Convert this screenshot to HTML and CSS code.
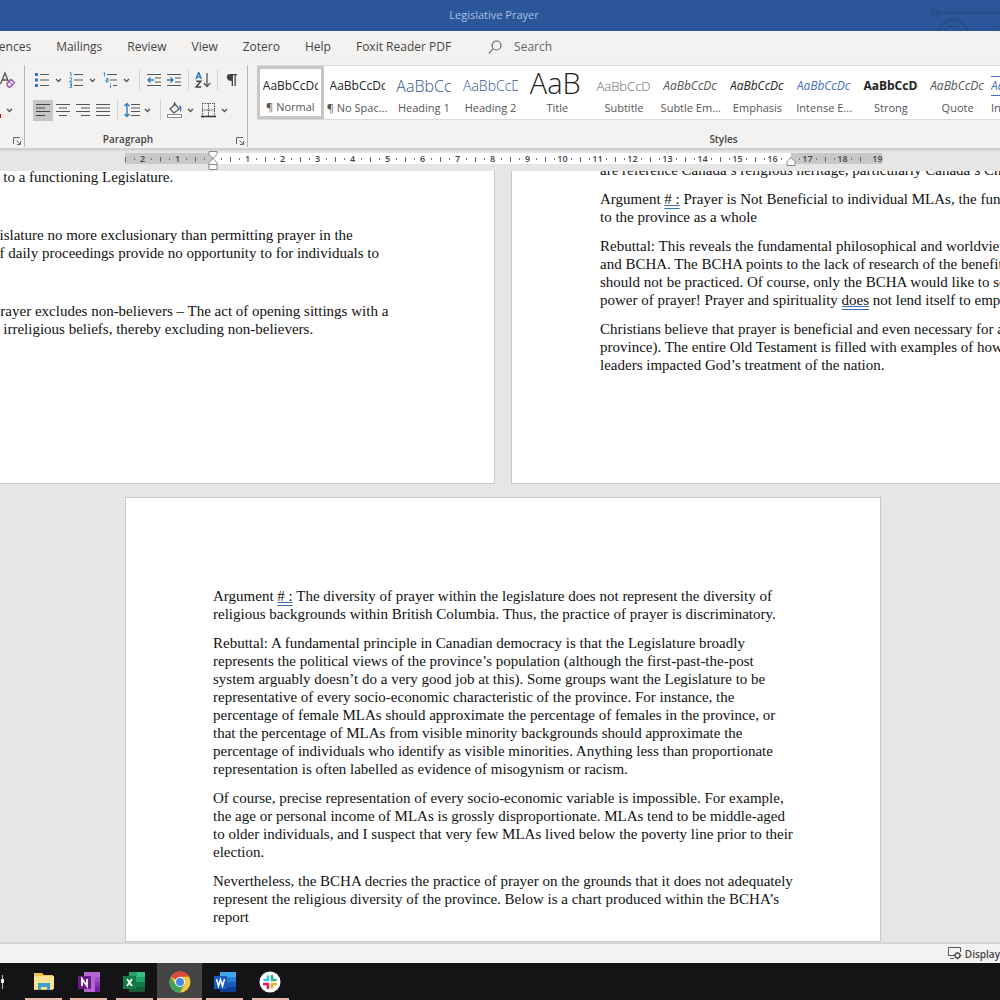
FILE: index.html
```html
<!DOCTYPE html>
<html lang="en">
<head>
<meta charset="utf-8">
<title>Legislative Prayer</title>
<link rel="stylesheet" href="styles.css">
</head>
<body>
<svg class="defs" aria-hidden="true">
  <symbol id="chev" viewBox="0 0 7 5"><path d="M1 1l2.500 2.500L6 1" fill="none" stroke="#555" stroke-width="1.300"/></symbol>
  <symbol id="launch" viewBox="0 0 8 8"><path d="M.5 7V.5H7M3.500 3.500L7 7M7.500 4v3.500H4" fill="none" stroke="#666"/></symbol>
</svg>

<header class="titlebar">
  <span>Legislative Prayer</span>
  <svg class="circuit" width="72" height="31" viewBox="0 0 72 31" fill="none" stroke="#264f8f" stroke-width="2" aria-hidden="true">
    <circle cx="7" cy="13" r="3"/><path d="M10 13h62"/><circle cx="25" cy="35" r="15" stroke-width="3"/><circle cx="25" cy="35" r="9"/><circle cx="70" cy="31" r="4"/>
  </svg>
</header>

<nav class="tabs">
  <a href="#">References</a><a href="#">Mailings</a><a href="#">Review</a><a href="#">View</a><a href="#">Zotero</a><a href="#">Help</a><a href="#">Foxit Reader PDF</a>
  <button class="search"><svg width="14" height="14" viewBox="0 0 14 14" fill="none" stroke="#666" stroke-width="1.200"><circle cx="8.500" cy="5.500" r="4.500"/><path d="M5.300 8.700L.7 13.300"/></svg>Search</button>
</nav>

<section class="ribbon">
  <div class="group font-group">
    <div class="tools">
      <button class="clear" aria-label="Clear formatting"><svg width="16" height="18" viewBox="0 0 16 18" fill="none"><path d="M.5 13L5 2l4 10M2 9h5.500" stroke="#555" stroke-width="1.300"/><path d="M7 12.500l4-4 3.500 3-4 4.500H8.500L7 14z" fill="#f3e6f8" stroke="#9350ab" stroke-width="1.300"/><path d="M9 10.500l3.500 3.500" stroke="#9350ab"/></svg></button>
    </div>
    <div class="tools">
      <button class="color" aria-label="Font color"><svg width="6" height="18" viewBox="0 0 6 18"><path d="M0 13h1v4H0z" fill="#c00"/></svg><svg width="7" height="5"><use href="#chev"/></svg></button>
    </div>
    <div class="label"><svg class="launcher" width="8" height="8"><use href="#launch"/></svg></div>
  </div>

  <div class="group para-group">
    <div class="tools">
      <button class="split" aria-label="Bullets"><svg width="16" height="16" viewBox="0 0 16 16"><path d="M0 1h3v3H0zM0 6.500h3v3H0zM0 12h3v3H0z" fill="#2f7dc0"/><path d="M5 2.500h9M5 8h9M5 13.500h9" stroke="#555" stroke-width="1.200"/></svg><svg width="7" height="5"><use href="#chev"/></svg></button>
      <button class="split" aria-label="Numbering"><svg width="16" height="16" viewBox="0 0 16 16"><g fill="none" stroke="#3b8bc8"><path d="M1 1l1-.5V4.500M.5 6h2v1.500L.7 9.500h2.300M.5 11h2v2h-1.500h1.500v2.500H.5"/></g><path d="M5 2.500h9M5 8h9M5 13.500h9" stroke="#555" stroke-width="1.200"/></svg><svg width="7" height="5"><use href="#chev"/></svg></button>
      <button class="split" aria-label="Multilevel list"><svg width="16" height="16" viewBox="0 0 16 16"><g fill="none" stroke="#3b8bc8"><path d="M.5 1l1-.5v4M3 6.500h2v3.500H3V8h2M7.500 11v1M7.500 13v3"/></g><path d="M4 2.500h10M7 8h7M10 13.500h4" stroke="#555" stroke-width="1.200"/></svg><svg width="7" height="5"><use href="#chev"/></svg></button>
      <span class="sep"></span>
      <button class="btn" aria-label="Decrease indent"><svg width="16" height="16" viewBox="0 0 16 16"><path d="M1 2.500h14M9 6h6M9 10h6M1 13.500h14" stroke="#555" stroke-width="1.200"/><path d="M8 8H2M4.500 5.500L2 8l2.500 2.500" fill="none" stroke="#2f7dc0" stroke-width="1.400"/></svg></button>
      <button class="btn" aria-label="Increase indent"><svg width="16" height="16" viewBox="0 0 16 16"><path d="M1 2.500h14M9 6h6M9 10h6M1 13.500h14" stroke="#555" stroke-width="1.200"/><path d="M1 8h6M4.500 5.500L7 8l-2.500 2.500" fill="none" stroke="#2f7dc0" stroke-width="1.400"/></svg></button>
      <span class="sep"></span>
      <button class="btn" aria-label="Sort"><svg width="16" height="16" viewBox="0 0 16 16" fill="none" stroke-width="1.500"><path d="M1 7l2.700-6.500L6.500 7M2 5h3.500" stroke="#2f7dc0"/><path d="M1.200 9.200h4.600L1.200 15h5" stroke="#444"/><path d="M12 1v13M8.800 11l3.200 3.500 3.200-3.500" stroke="#555" stroke-width="1.300"/></svg></button>
      <span class="sep"></span>
      <button class="btn" aria-label="Show paragraph marks"><svg width="16" height="16" viewBox="0 0 16 16"><path d="M6 2h7v1.200h-1.200V14h-1.300V3.200H9V14H7.700V9C1.500 9 1.500 2 6 2z" fill="#444"/></svg></button>
    </div>
    <div class="tools">
      <button class="btn on" aria-label="Align left"><svg width="16" height="16" viewBox="0 0 16 16" stroke="#444" stroke-width="1.200"><path d="M1 2.500h14M1 6h9M1 9.500h14M1 13.500h9"/></svg></button>
      <button class="btn" aria-label="Center"><svg width="16" height="16" viewBox="0 0 16 16" stroke="#555" stroke-width="1.200"><path d="M1 2.500h14M4 6h8M1 9.500h14M4 13.500h8"/></svg></button>
      <button class="btn" aria-label="Align right"><svg width="16" height="16" viewBox="0 0 16 16" stroke="#555" stroke-width="1.200"><path d="M1 2.500h14M6 6h9M1 9.500h14M6 13.500h9"/></svg></button>
      <button class="btn" aria-label="Justify"><svg width="16" height="16" viewBox="0 0 16 16" stroke="#555" stroke-width="1.200"><path d="M1 2.500h14M1 6h14M1 9.500h14M1 13.500h14"/></svg></button>
      <span class="sep"></span>
      <button class="split" aria-label="Line spacing"><svg width="16" height="16" viewBox="0 0 16 16" fill="none"><path d="M3 1.500v13M.5 4L3 1.500 5.500 4M.5 12L3 14.500 5.500 12" stroke="#2f7dc0" stroke-width="1.400"/><path d="M7 2.500h9M7 6h9M7 9.500h9M7 13.500h9" stroke="#555" stroke-width="1.200"/></svg><svg width="7" height="5"><use href="#chev"/></svg></button>
      <span class="sep"></span>
      <button class="split" aria-label="Shading"><svg width="16" height="16" viewBox="0 0 16 16" fill="none"><path d="M3 7l5-5 4 5-5 4zM7.500 4V0" stroke="#555" stroke-width="1.200"/><path d="M12 3c3 1 3 4 1.500 7C12 8 13 5 12 3z" fill="#2f7dc0"/><path d="M.5 12.500h14v3H.5z" fill="#fff" stroke="#888"/></svg><svg width="7" height="5"><use href="#chev"/></svg></button>
      <button class="split" aria-label="Borders"><svg width="16" height="16" viewBox="0 0 16 16" fill="none" stroke="#555"><path d="M1 1.500h13M1.500 1v13M13.500 1v13" stroke-dasharray="1.500 1"/><path d="M7.500 1v13M1 8h13" stroke-dasharray="1.500 .8"/><path d="M0 14.500h15" stroke="#333" stroke-width="1.500"/></svg><svg width="7" height="5"><use href="#chev"/></svg></button>
    </div>
    <div class="label">Paragraph<svg class="launcher" width="8" height="8"><use href="#launch"/></svg></div>
  </div>

  <div class="group style-group">
    <div class="gallery">
      <button class="style selected"><span class="sample">AaBbCcDc</span><span class="name">¶ Normal</span></button>
      <button class="style"><span class="sample">AaBbCcDc</span><span class="name">¶ No Spac...</span></button>
      <button class="style"><span class="sample h1">AaBbCc</span><span class="name">Heading 1</span></button>
      <button class="style"><span class="sample h2">AaBbCcD</span><span class="name">Heading 2</span></button>
      <button class="style"><span class="sample big">AaB</span><span class="name">Title</span></button>
      <button class="style"><span class="sample sub">AaBbCcD</span><span class="name">Subtitle</span></button>
      <button class="style"><span class="sample subtle">AaBbCcDc</span><span class="name">Subtle Em...</span></button>
      <button class="style"><span class="sample emph">AaBbCcDc</span><span class="name">Emphasis</span></button>
      <button class="style"><span class="sample intense">AaBbCcDc</span><span class="name">Intense E...</span></button>
      <button class="style"><span class="sample strong">AaBbCcDc</span><span class="name">Strong</span></button>
      <button class="style"><span class="sample subtle">AaBbCcDc</span><span class="name">Quote</span></button>
      <button class="style cut"><span class="sample intense lined">AaBbCcDc</span><span class="name">Intense Q...</span></button>
    </div>
    <div class="label">Styles</div>
  </div>
</section>

<div class="ruler">
  <div class="scale">
    <i>2</i><i>1</i><i></i><i>1</i><i>2</i><i>3</i><i>4</i><i>5</i><i>6</i><i>7</i><i>8</i><i>9</i><i>10</i><i>11</i><i>12</i><i>13</i><i>14</i><i>15</i><i>16</i><i>17</i><i>18</i><i>19</i>
    <svg class="indent-left" width="10" height="20" viewBox="0 0 10 20" fill="#fff" stroke="#888"><path d="M1 .5h8v3l-4 4-4-4zM5 7.500l4 4v2H1v-2zM1 13.500h8v5H1z"/></svg>
    <svg class="indent-right" width="10" height="9" viewBox="0 0 10 9" fill="#fff" stroke="#888"><path d="M5 .5l4 4v4H1v-4z"/></svg>
  </div>
</div>

<main class="workspace">
  <div class="spread">
    <article class="page left-page">
      <p>   to a functioning Legislature.</p>
      <p> </p>
      <p>gislature no more exclusionary than permitting prayer in the
of daily proceedings provide no opportunity to for individuals to</p>
      <p> </p>
      <p>Prayer excludes non-believers – The act of opening sittings with a
y irreligious beliefs, thereby excluding non-believers.</p>
    </article>
    <article class="page right-page">
      <p>are reference Canada’s religious heritage, particularly Canada’s Christian</p>
      <p>Argument <u># :</u> Prayer is Not Beneficial to individual MLAs, the function
to the province as a whole</p>
      <p>Rebuttal: This reveals the fundamental philosophical and worldviews
and BCHA. The BCHA points to the lack of research of the benefits
should not be practiced. Of course, only the BCHA would like to see
power of prayer! Prayer and spirituality <u>does</u> not lend itself to empirical</p>
      <p>Christians believe that prayer is beneficial and even necessary for a
province). The entire Old Testament is filled with examples of how
leaders impacted God’s treatment of the nation.</p>
    </article>
  </div>
  <article class="page last-page">
    <p>Argument <u># :</u> The diversity of prayer within the legislature does not represent the diversity of
religious backgrounds within British Columbia. Thus, the practice of prayer is discriminatory.</p>
    <p>Rebuttal: A fundamental principle in Canadian democracy is that the Legislature broadly
represents the political views of the province’s population (although the first-past-the-post
system arguably doesn’t do a very good job at this). Some groups want the Legislature to be
representative of every socio-economic characteristic of the province. For instance, the
percentage of female MLAs should approximate the percentage of females in the province, or
that the percentage of MLAs from visible minority backgrounds should approximate the
percentage of individuals who identify as visible minorities. Anything less than proportionate
representation is often labelled as evidence of misogynism or racism.</p>
    <p>Of course, precise representation of every socio-economic variable is impossible. For example,
the age or personal income of MLAs is grossly disproportionate. MLAs tend to be middle-aged
to older individuals, and I suspect that very few MLAs lived below the poverty line prior to their
election.</p>
    <p>Nevertheless, the BCHA decries the practice of prayer on the grounds that it does not adequately
represent the religious diversity of the province. Below is a chart produced within the BCHA’s
report</p>
  </article>
</main>

<div class="status">
  <button class="display"><svg width="14" height="13" viewBox="0 0 14 13" fill="none" stroke="#555"><path d="M6 8.500H.5V.5h12V5M2 11.500h4"/><circle cx="9.500" cy="8.500" r="2.500" stroke-width="1.500"/><path d="M9.500 5v1M9.500 11v1.500M6 8.500h1M12 8.500h1.500"/></svg>Display</button>
</div>

<footer class="taskbar">
  <svg class="taskview" width="21" height="37" viewBox="0 0 21 37" aria-hidden="true"><path d="M2.500 12v14" stroke="#bbb"/><path d="M1 16h3v4H1z" fill="#eee"/></svg>
  <div class="apps">
    <button aria-label="File Explorer"><svg width="22" height="22" viewBox="0 0 22 22"><path d="M1 2h8l2 2h9v15H1z" fill="#f0c251"/><path d="M1 5h20v13H1z" fill="#fbe190"/><path d="M5 12h12v7h-3v-3H8v3H5z" fill="#3d9fd3"/></svg></button>
    <button aria-label="OneNote"><svg width="22" height="22" viewBox="0 0 22 22"><path d="M6 1h16v20H6z" fill="#b666d2"/><path d="M17 6h5v5h-5z" fill="#9a4fc0"/><path d="M17 11h5v5h-5z" fill="#8535b0"/><path d="M17 16h5v5h-5z" fill="#6e2399"/><path d="M0 5h13v13H0z" fill="#6b1b87"/><path d="M4 15V8l5 7V8" fill="none" stroke="#fff" stroke-width="1.800"/></svg></button>
    <button aria-label="Excel"><svg width="22" height="22" viewBox="0 0 22 22"><path d="M6 1h16v20H6z" fill="#21a366"/><path d="M14 1h8v5h-8z" fill="#33c481"/><path d="M6 11h16v5H6z" fill="#107c41"/><path d="M6 16h16v5H6z" fill="#185c37"/><path d="M0 5h13v13H0z" fill="#107c41"/><path d="M4 8l5 7M9 8l-5 7" stroke="#fff" stroke-width="1.800"/></svg></button>
    <button class="active" aria-label="Chrome"><svg width="22" height="22" viewBox="0 0 22 22"><circle cx="11" cy="11" r="10.500" fill="#f6c945"/><path d="M11 11L1.900 5.750A10.500 10.500 0 0 1 20.100 5.750H11z" fill="#dc4b3e"/><path d="M1.900 5.750A10.500 10.500 0 0 0 11 21.500l4.500-8L11 11 6.500 13.500z" fill="#3fa35b"/><circle cx="11" cy="11" r="5" fill="#fff"/><circle cx="11" cy="11" r="4" fill="#4a86e8"/></svg></button>
    <button aria-label="Word"><svg width="22" height="22" viewBox="0 0 22 22"><path d="M6 1h16v20H6z" fill="#41a5ee"/><path d="M6 6h16v5H6z" fill="#2b7cd3"/><path d="M6 11h16v5H6z" fill="#185abd"/><path d="M6 16h16v5H6z" fill="#103f91"/><path d="M0 5h13v13H0z" fill="#185abd"/><path d="M2.500 8l2 7 2-6.500 2 6.500 2-7" fill="none" stroke="#fff" stroke-width="1.500"/></svg></button>
    <button aria-label="Slack"><svg width="22" height="22" viewBox="0 0 22 22" fill="none" stroke-width="2.600" stroke-linecap="round"><circle cx="11" cy="11" r="10.500" fill="#fff"/><path d="M9 5.500V9M5.500 9H9" stroke="#36c5f0"/><path d="M13 5v4M13 9h3.500" stroke="#2eb67d"/><path d="M13 13v3.500M13 13h4" stroke="#ecb22e"/><path d="M9 13v4M5 13h4" stroke="#e01e5a"/></svg></button>
  </div>
</footer>
</body>
</html>
```
FILE: styles.css
```css
* { box-sizing: border-box; }
body {
  margin: 0;
  height: 100vh;
  display: flex;
  flex-direction: column;
  overflow: hidden;
  background: #e6e6e6;
  color: #444;
  font-family: "Open Sans", "Noto Sans", sans-serif;
  font-size: 11px;
}
button {
  border: 0;
  padding: 0;
  background: none;
  color: inherit;
  font: inherit;
}
svg { flex: none; display: block; }
.defs { position: absolute; width: 0; height: 0; }

.titlebar {
  position: relative;
  flex: none;
  height: 31px;
  display: flex;
  align-items: center;
  justify-content: center;
  padding: 0 12px 2px 0;
  background: #2b579a;
  color: #a9c0e2;
}
.circuit { position: absolute; right: 0; top: 0; }

.tabs {
  flex: none;
  display: flex;
  align-items: center;
  gap: 25px;
  height: 31px;
  margin-left: -31px;
  font-size: 12px;
}
.tabs, .ribbon, .status { background: #f3f2f1; }
.tabs a { color: #444; text-decoration: none; white-space: nowrap; }
.search { display: flex; align-items: center; gap: 12px; margin-left: 12px; color: #666; }

.ribbon {
  flex: none;
  display: flex;
  height: 87px;
  padding-top: 3px;
  border-bottom: 1px solid #d2d0ce;
  box-shadow: 0 1px 2px #c4c4c4;
}
.group { display: flex; flex-direction: column; height: 82px; }
.font-group { width: 25px; border-right: 1px solid #b8b6b4; }
.para-group { width: 223px; padding-left: 8px; border-right: 1px solid #b8b6b4; }
.style-group { flex: 1; min-width: 0; padding-left: 9px; }
.tools { display: flex; align-items: center; height: 30px; }
.label {
  position: relative;
  display: flex;
  justify-content: center;
  align-items: center;
  height: 16px;
  margin-top: auto;
  font-size: 10px;
  font-weight: 600;
}
.para-group .label { padding-right: 24px; }
.style-group .label { padding-left: 190px; }
.launcher { position: absolute; right: 3px; bottom: 2px; }
.color { display: flex; align-items: center; }
.btn { display: flex; align-items: center; justify-content: center; width: 20px; height: 21px; }
.btn.on { background: #c8c6c4; }
.split { display: flex; align-items: center; gap: 4px; width: 34px; height: 21px; padding-left: 2px; }
.sep { width: 1px; height: 20px; margin: 0 4px; background: #d4d2d0; }

.gallery {
  display: grid;
  grid-template-columns: repeat(11, minmax(0, 1fr)) 9px;
  height: 55px;
  border-top: 1px solid #dcdad8;
  border-bottom: 1px solid #dcdad8;
  background: #fff;
}
.style {
  display: flex;
  flex-direction: column;
  align-items: center;
  overflow: hidden;
  padding-top: 7px;
  white-space: nowrap;
}
.style.selected { padding-top: 4px; border: 3px solid #c8c6c4; }
.style.cut { align-items: flex-start; }
.sample {
  width: 55px;
  height: 26px;
  line-height: 26px;
  overflow: hidden;
  text-align: left;
  color: #222;
  font-size: 12px;
}
.name { line-height: 18px; color: #555; }
.sample.h1, .sample.h2 { color: #2f5496; font-weight: 300; }
.sample.h1 { font-size: 16px; }
.sample.h2 { font-size: 14px; }
.sample.big { font-size: 29px; font-weight: 300; line-height: 20px; }
.sample.sub { font-size: 13px; color: #666; font-weight: 300; }
.sample.subtle { font-style: italic; color: #555; }
.sample.emph { font-style: italic; }
.sample.intense { font-style: italic; color: #4472c4; }
.sample.strong { font-weight: 700; }
.sample.lined { height: 20px; margin: 3px 0; line-height: 18px; border-top: 1px solid #4472c4; border-bottom: 1px solid #4472c4; }

.ruler { flex: none; display: flex; justify-content: center; height: 22px; padding: 4px 0 0 7px; }
.scale {
  position: relative;
  flex: none;
  display: flex;
  width: 757px;
  height: 11px;
  background: linear-gradient(90deg, #c8c8c8 88px, #fff 88px 666px, #c8c8c8 666px);
}
.scale i {
  flex: none;
  width: 35px;
  font-size: 9px;
  line-height: 11px;
  font-style: normal;
  font-weight: 600;
  text-align: center;
  background:
    linear-gradient(#666, #666) 0 4px / 1px 5px no-repeat,
    linear-gradient(#777, #777) 9px 5px / 1px 2px no-repeat,
    linear-gradient(#777, #777) 26px 5px / 1px 2px no-repeat;
}
.scale i:last-of-type { background: linear-gradient(#666, #666) 0 4px / 1px 5px no-repeat; }
.indent-left { position: absolute; left: 83px; top: -2px; }
.indent-right { position: absolute; left: 661px; top: 4px; }

.workspace {
  flex: 1;
  min-height: 0;
  display: flex;
  flex-direction: column;
  align-items: center;
  gap: 13px;
  overflow: hidden;
  padding-left: 6px;
  border-bottom: 2px solid #d6d6d6;
}
.spread { flex: none; display: flex; gap: 16px; margin-top: -11px; }
.page {
  flex: none;
  width: 756px;
  border: 1px solid #c8c8c8;
  background: #fff;
  color: #111;
  font-family: "Liberation Serif", serif;
  font-size: 15px;
  line-height: 18px;
  overflow: hidden;
}
.spread .page { min-height: 324px; }
.page p { margin: 0 0 11px; min-height: 18px; white-space: pre; }
.left-page { padding: 7px 0 0 252px; }
.right-page { padding-left: 88px; }
.last-page { flex: 1 0 0; padding: 89px 0 0 87px; }
.page u { text-decoration: underline double #3e6db5; }

.status { flex: none; display: flex; justify-content: flex-end; height: 19px; }
.display { display: flex; align-items: center; gap: 3px; font-size: 10px; font-weight: 600; }

.taskbar { flex: none; display: flex; height: 37px; background: #141416; }
.apps { display: grid; grid-template-columns: repeat(6, 1fr); width: 272px; }
.apps button {
  display: flex;
  align-items: center;
  justify-content: center;
  background: linear-gradient(#eab8a8, #eab8a8) bottom / 37px 2px no-repeat;
}
.apps .active { background: linear-gradient(#eab8a8, #eab8a8) bottom / 100% 2px no-repeat, #454547; }
```
